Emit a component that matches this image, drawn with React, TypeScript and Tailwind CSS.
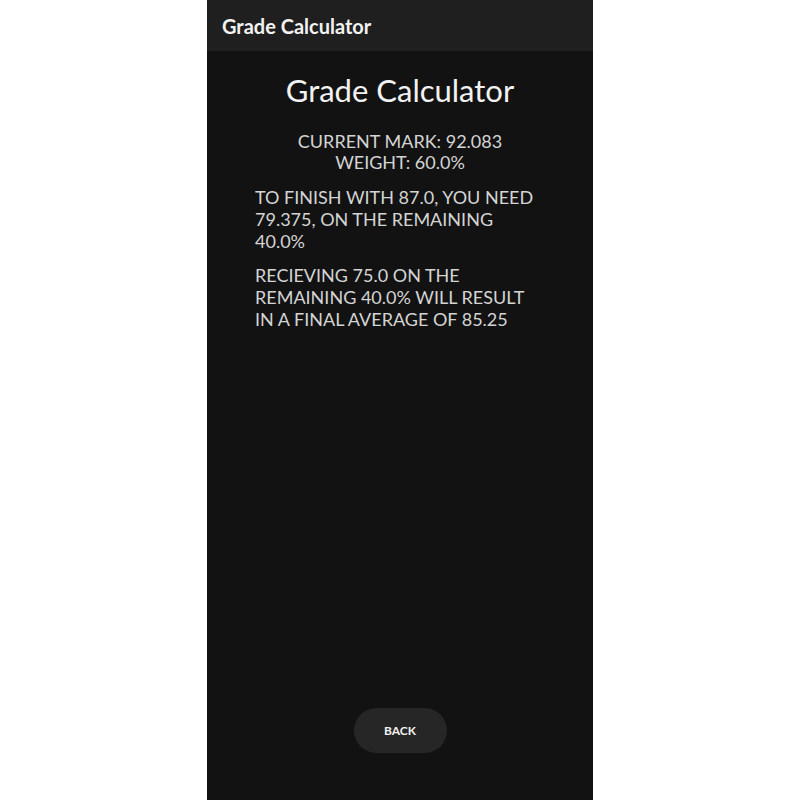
export default function App() {
  return (
    <div className="flex h-[800px] w-full justify-center bg-white" style={{ fontFamily: 'Lato, "Open Sans", sans-serif' }}>
      <div className="flex h-full w-[386px] flex-col bg-[#121212]">
        <div className="flex h-[51px] items-center bg-[#1f1f1f] px-[15px]">
          <span className="text-[20px] font-bold text-[#f2f2f2]">Grade Calculator</span>
        </div>
        <div className="flex flex-1 flex-col px-[48px]">
          <h1 className="mt-[19px] text-center text-[31px] leading-[40px] text-[#f2f2f2]">Grade Calculator</h1>
          <div className="mt-[21px] text-center text-[18px] leading-[21px] text-[#d4d4d4]">
            <p>CURRENT MARK: 92.083</p>
            <p>WEIGHT: 60.0%</p>
          </div>
          <p className="mt-[13px] text-[18px] leading-[22px] text-[#d4d4d4]">
            TO FINISH WITH 87.0, YOU NEED 79.375, ON THE REMAINING 40.0%
          </p>
          <p className="mt-[12px] text-[18px] leading-[22px] text-[#d4d4d4]">
            RECIEVING 75.0 ON THE REMAINING 40.0% WILL RESULT IN A FINAL AVERAGE OF 85.25
          </p>
          <div className="flex-1" />
          <div className="mb-[47px] flex justify-center">
            <button className="h-[45px] w-[93px] rounded-full bg-[#262626] text-[12px] font-bold text-[#f2f2f2]">
              BACK
            </button>
          </div>
        </div>
      </div>
    </div>
  )
}
